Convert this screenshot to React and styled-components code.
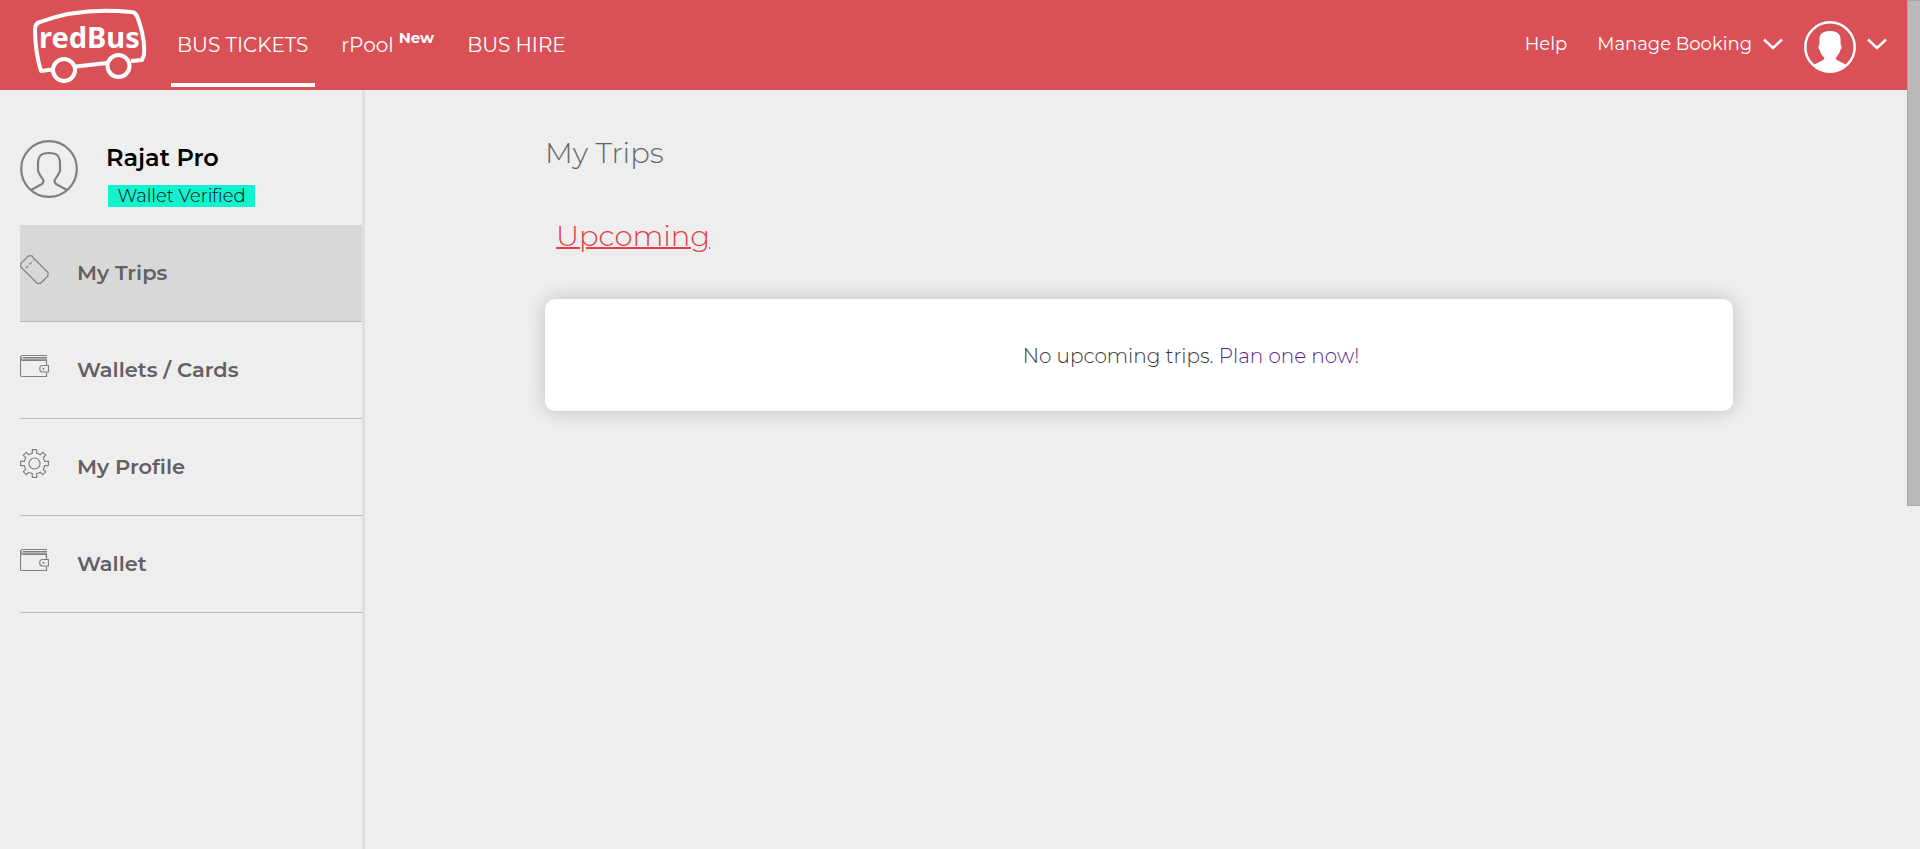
import React from "react";
import styled, { createGlobalStyle } from "styled-components";

const GlobalStyle = createGlobalStyle`
  *, *::before, *::after { box-sizing: border-box; }
  html { background: #eeeeee; }
  body {
    margin: 0;
    font-family: Montserrat, Inter, "Open Sans", sans-serif;
    color: #000;
  }
`;

const Page = styled.div`
  display: flex;
  align-items: flex-start;
  min-height: 100vh;
  background: #eeeeee;
`;

const Site = styled.div`
  flex: 1;
  min-width: 0;
  min-height: 100vh;
  display: flex;
  flex-direction: column;
`;

const ScrollThumb = styled.div`
  flex: none;
  width: 13px;
  height: 506px;
  background: #bababa;
  border: 1px solid #a8a8a8;
  border-right: 0;
`;

const Header = styled.header`
  display: flex;
  align-items: stretch;
  height: 90px;
  padding: 0 20px 0 32px;
  background: #d95057;
  color: #fff;
`;

const LogoLink = styled.a`
  display: block;
  width: 116px;
  margin: 8px 23px 0 0;
`;

const Nav = styled.nav`
  display: flex;
  gap: 20px;
`;

const NavLink = styled.a`
  display: flex;
  align-items: center;
  height: 87px;
  padding: 6px 7px 0 6px;
  border-bottom: 4px solid ${(p) => (p.$active ? "#fff" : "transparent")};
  color: #fff;
  font-size: 20px;
  line-height: 24px;
  text-decoration: none;
  white-space: nowrap;
`;

const NewTag = styled.span`
  align-self: center;
  margin: 0 0 14px 5px;
  font-size: 15px;
  line-height: 18px;
  font-weight: 700;
`;

const Account = styled.div`
  display: flex;
  align-items: center;
  margin-left: auto;
`;

const HelpLink = styled.a`
  margin: 0 30px 2px 0;
  color: #fff;
  font-size: 18px;
  line-height: 24px;
  text-decoration: none;
`;

const MenuButton = styled.button`
  display: flex;
  align-items: center;
  gap: 11px;
  padding: 0;
  border: 0;
  background: none;
  color: #fff;
  font: inherit;
  font-size: 18px;
  line-height: 24px;
  cursor: pointer;
`;

const BookingButton = styled(MenuButton)`
  margin: 0 21px 2px 0;
`;

const ProfileButton = styled(MenuButton)`
  margin-top: 4px;

  svg:last-child { margin-bottom: 6px; }
`;

const Body = styled.div`
  flex: 1;
  display: flex;
`;

const Sidebar = styled.aside`
  flex: none;
  width: 365px;
  padding: 50px 0 0 20px;
  border-right: 3px solid #dfdfdf;
`;

const User = styled.div`
  display: flex;
  gap: 28px;
  height: 85px;
`;

const UserName = styled.div`
  margin-top: 3px;
  font-size: 24px;
  line-height: 30px;
  font-weight: 600;
`;

const Verified = styled.span`
  display: block;
  width: 147px;
  margin: 12px 0 0 2px;
  background: #12f2cf;
  font-size: 18px;
  line-height: 22px;
  font-weight: 300;
  text-align: center;
`;

const Menu = styled.ul`
  margin: 0;
  padding: 0;
  list-style: none;
`;

const MenuLink = styled.a`
  display: flex;
  align-items: center;
  gap: 28px;
  height: 97px;
  border-bottom: 1px solid #bcb8b9;
  background: ${(p) => (p.$active ? "#d8d8d8" : "transparent")};
  color: #626061;
  font-size: 21px;
  line-height: 24px;
  font-weight: 600;
  text-decoration: none;

  svg { margin-bottom: 8px; }
`;

const Main = styled.main`
  flex: 1;
  min-width: 0;
  padding: 46px 174px 40px 180px;
`;

const Title = styled.h1`
  margin: 0;
  color: #666;
  font-size: 29px;
  line-height: 34px;
  font-weight: 300;
`;

const Section = styled.h2`
  margin: 49px 0 46px 11px;
  color: #e23f46;
  font-size: 29px;
  line-height: 34px;
  font-weight: 300;
  text-decoration: underline;
  text-decoration-thickness: 2px;
`;

const Card = styled.section`
  display: flex;
  align-items: center;
  justify-content: center;
  min-height: 112px;
  padding: 2px 0 0 104px;
  border-radius: 10px;
  background: #fff;
  box-shadow: 0 0 20px rgba(0, 0, 0, 0.2);
`;

const Message = styled.p`
  margin: 0;
  color: #333;
  font-size: 20px;
  line-height: 24px;
  font-weight: 300;
`;

const PlanLink = styled.a`
  color: #551a8b;
  text-decoration: none;
`;

const Logo = () => (
  <svg width="116" height="76" viewBox="0 0 116 76" fill="none" stroke="#fff" strokeWidth="4" strokeLinejoin="round" display="block">
    <path d="M20 61.500L9 63C5 50 3 35 3 21C3 18 5 15 8 14C37 3 69 1 99 4C102 4 104 6 105 8C110 21 113 35 112 47L110 52L99 53M75 55L44 58.500" />
    <circle cx="32" cy="62" r="11" />
    <circle cx="86.500" cy="58" r="11" />
    <text x="7" y="40" fill="#fff" stroke="none" fontFamily="'Noto Sans', sans-serif" fontWeight="700" fontSize="29">redBus</text>
  </svg>
);

const Chevron = () => (
  <svg width="20" height="12" viewBox="0 0 20 12" fill="none" stroke="#fff" strokeWidth="2.500">
    <path d="M1 1.500L10 10L19 1.500" />
  </svg>
);

const HeaderAvatar = () => (
  <svg width="52" height="52" viewBox="0 0 52 52">
    <circle cx="26" cy="26" r="24.700" fill="none" stroke="#fff" strokeWidth="2.500" />
    <path fill="#fff" d="M26 10C32 10 36 12.500 36.500 17L36.700 24C38.200 25 37.800 28 36.300 29C35.500 32.500 33.500 35 31.500 37C32 40 39 41 42.500 44.500C33 53.500 19 53.500 9.500 44.500C13 41 20 40 20.500 37C18.500 35 16.500 32.500 15.700 29C14.200 28 13.800 25 15.300 24L15.500 17C16 12.500 20 10 26 10Z" />
  </svg>
);

const UserAvatar = () => (
  <svg width="58" height="58" viewBox="0 0 58 58" fill="none" stroke="#808080" strokeWidth="2.200">
    <circle cx="29" cy="29" r="27.800" />
    <path d="M11 50L22 44C24 42 24 40 22 38C20 35.500 19 33 18 31V24C18 16 21 13 29 13S40 16 40 24V31C39 33 38 35.500 36 38C34 40 34 42 36 44L47 50" />
  </svg>
);

const iconProps = { width: 29, height: 29, viewBox: "0 0 29 29", fill: "none", stroke: "#808080", strokeWidth: 1.2, "aria-hidden": true };

const TicketIcon = () => (
  <svg {...iconProps}>
    <path d="M8.500 .8H12L13.500 3L28 17.500V21L20.500 28.300H17L15.500 26.500L.8 12V8.500Z" />
    <path d="M6 13L13.500 5.500" strokeDasharray="3 2" />
  </svg>
);

const WalletIcon = () => (
  <svg {...iconProps}>
    <path d="M27 3.500H3C1.500 3.500 .5 4.500 .5 6V23C.5 24 1.200 24.500 2 24.500H26.500V20.500M26.500 13V8.500H3C1 8.500 .8 6.500 1.500 5.500M3 5.500H27M2.500 7.200H27" />
    <path d="M28.500 13.500H22.500C18.800 13.500 18.800 20 22.500 20H28.500Z" />
    <circle cx="23.500" cy="16.800" r=".5" />
  </svg>
);

const GearIcon = () => (
  <svg {...iconProps}>
    <circle cx="14.500" cy="14.500" r="5.500" />
    {[0, 90, 180, 270].map((a) => (
      <path
        key={a}
        transform={`rotate(${a} 14.500 14.500)`}
        d="M16.700 .6H12.300V4.300C11 4.600 9.800 5 8.700 5.700L6.200 3.300L3.300 6.200L5.700 8.700C5 9.800 4.600 11 4.300 12.300H.6"
      />
    ))}
  </svg>
);

const menuItems = [
  { label: "My Trips", Icon: TicketIcon, active: true },
  { label: "Wallets / Cards", Icon: WalletIcon },
  { label: "My Profile", Icon: GearIcon },
  { label: "Wallet", Icon: WalletIcon },
];

export default function App() {
  return (
    <>
      <GlobalStyle />
      <Page>
        <Site>
          <Header>
            <LogoLink href="#" aria-label="redBus"><Logo /></LogoLink>
            <Nav>
              <NavLink href="#" $active>BUS TICKETS</NavLink>
              <NavLink href="#">rPool<NewTag>New</NewTag></NavLink>
              <NavLink href="#">BUS HIRE</NavLink>
            </Nav>
            <Account>
              <HelpLink href="#">Help</HelpLink>
              <BookingButton type="button">Manage Booking<Chevron /></BookingButton>
              <ProfileButton type="button" aria-label="Account"><HeaderAvatar /><Chevron /></ProfileButton>
            </Account>
          </Header>
          <Body>
            <Sidebar>
              <User>
                <UserAvatar />
                <div>
                  <UserName>Rajat Pro</UserName>
                  <Verified>Wallet Verified</Verified>
                </div>
              </User>
              <Menu>
                {menuItems.map(({ label, Icon, active }) => (
                  <li key={label}>
                    <MenuLink href="#" $active={active}><Icon />{label}</MenuLink>
                  </li>
                ))}
              </Menu>
            </Sidebar>
            <Main>
              <Title>My Trips</Title>
              <Section>Upcoming</Section>
              <Card>
                <Message>No upcoming trips. <PlanLink href="#">Plan one now!</PlanLink></Message>
              </Card>
            </Main>
          </Body>
        </Site>
        <ScrollThumb />
      </Page>
    </>
  );
}
